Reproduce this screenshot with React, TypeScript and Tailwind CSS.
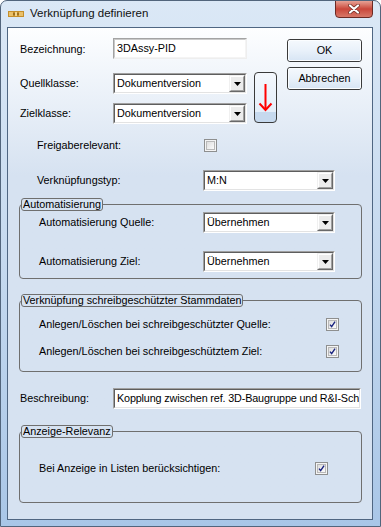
import React from "react";

function Sunken({ className = "", children, light = false }: { className?: string; children?: React.ReactNode; light?: boolean }) {
  return (
    <div
      className={
        "flex border " +
        (light
          ? "border-t-[#a3a3a3] border-l-[#a3a3a3] border-r-[#eeeeee] border-b-[#eeeeee] "
          : "border-t-[#a0a0a0] border-l-[#a0a0a0] border-r-[#ffffff] border-b-[#ffffff] ") +
        className
      }
    >
      <div
        className={
          "flex flex-1 min-w-0 border bg-white " +
          (light
            ? "border-t-[#c9c9c9] border-l-[#c9c9c9] border-r-[#f4f4f4] border-b-[#f4f4f4]"
            : "border-t-[#5e5e5e] border-l-[#5e5e5e] border-r-[#e3e3e3] border-b-[#e3e3e3]")
        }
      >
        {children}
      </div>
    </div>
  );
}

function Combo({ className = "", value }: { className?: string; value: string }) {
  return (
    <Sunken className={"h-[21px] " + className}>
      <div className="flex-1 min-w-0 pl-[2px] flex items-center whitespace-nowrap overflow-hidden">{value}</div>
      <div className="w-[16px] h-full flex border border-t-[#f0f0f0] border-l-[#f0f0f0] border-r-[#696969] border-b-[#696969]">
        <div className="flex-1 flex items-center justify-center bg-[#ececec] border border-t-white border-l-white border-r-[#a0a0a0] border-b-[#a0a0a0]">
          <svg width="7" height="4" viewBox="0 0 7 4">
            <path d="M0 0H7L3.5 4Z" fill="#000" />
          </svg>
        </div>
      </div>
    </Sunken>
  );
}

function Check({ checked }: { checked?: boolean }) {
  return (
    <div className="w-[13px] h-[13px] shrink-0 border border-[#8e8f8f] bg-[#f4f4f4] p-[1px]">
      <div className="w-full h-full border border-[#b9b9b9] bg-linear-to-br from-[#dedede] to-[#fbfbfb] flex items-center justify-center">
        {checked && (
          <svg width="9" height="9" viewBox="0 0 9 9">
            <path d="M1.3 4.6 L3.4 7.2 L7.8 0.8" stroke="#17217f" strokeWidth="1.8" fill="none" />
          </svg>
        )}
      </div>
    </div>
  );
}

function Btn({ className = "", children }: { className?: string; children: React.ReactNode }) {
  return (
    <div
      className={
        "flex items-center justify-center rounded-[3px] border border-[#3a3a3a] bg-linear-to-b from-[#f5f9fd] via-[#e9f1fa] to-[#d7e5f4] " +
        className
      }
    >
      <div className="w-full h-full flex items-center justify-center rounded-[2px] border border-[#fbfdff]">{children}</div>
    </div>
  );
}

function Group({ title, className = "", children }: { title: string; className?: string; children: React.ReactNode }) {
  return (
    <fieldset className={"w-[343px] border border-[#6f6f6f] rounded-[4px] " + className}>
      <legend className="ml-[1px] h-[13px] px-[1px] border border-[#6f6f6f] rounded-[3px] leading-[11px]">{title}</legend>
      {children}
    </fieldset>
  );
}

export default function App() {
  return (
    <div className="w-[381px] h-[527px] flex flex-col border border-[#52657c] rounded-t-[7px] bg-linear-to-b from-[#dbe8f6] via-[#c5d9ef] to-[#a9c6e7] font-['Liberation_Sans',Arial,sans-serif] text-[10.8px] text-black overflow-hidden">
      {/* title bar */}
      <div className="h-[26px] flex items-center">
        <svg className="ml-[7px]" width="16" height="6" viewBox="0 0 16 6">
          <rect x="0" y="0" width="16" height="6" fill="#c58f2b" />
          <rect x="1" y="1" width="4" height="4" fill="#e9c06a" />
          <rect x="11" y="1" width="4" height="4" fill="#e9c06a" />
          <rect x="5" y="2.5" width="6" height="1" fill="#7a5212" />
          <rect x="7" y="1" width="2" height="4" fill="#f3d58c" />
        </svg>
        <span className="ml-[6px] text-[11.5px] text-[#111]">Verknüpfung definieren</span>
        <div className="ml-auto mr-[7px] self-start mt-[-1px] w-[38px] h-[18px] rounded-b-[4px] border border-[#6b2a24] bg-linear-to-b from-[#e6a195] via-[#c9463a] to-[#d77768] flex items-center justify-center">
          <svg width="12" height="10" viewBox="0 0 12 10">
            <path d="M2 1.5 L10 8.5 M10 1.5 L2 8.5" stroke="#6a2a22" strokeWidth="3.6" strokeLinecap="round" />
            <path d="M2 1.5 L10 8.5 M10 1.5 L2 8.5" stroke="#ffffff" strokeWidth="2.2" strokeLinecap="round" />
          </svg>
        </div>
      </div>

      {/* client area */}
      <div className="ml-[6px] w-[366px] h-[493px] border border-[#4f6682] bg-linear-to-b from-[#fdfeff] to-[#d6e2f1] to-30% flex flex-col pl-[11px] pr-[10px] pt-[10px]">
        {/* top block */}
        <div className="flex ml-[1px]">
          <div className="flex flex-col w-[227px]">
            <div className="flex h-[21px] items-center">
              <span className="w-[93px] pt-[2px]">Bezeichnung:</span>
              <Sunken light className="w-[134px] h-[21px]">
                <div className="pl-[2px] flex items-center">3DAssy-PID</div>
              </Sunken>
            </div>
            <div className="flex h-[21px] items-center mt-[14px]">
              <span className="w-[93px]">Quellklasse:</span>
              <Combo className="w-[134px]" value="Dokumentversion" />
            </div>
            <div className="flex h-[21px] items-center mt-[9px]">
              <span className="w-[93px]">Zielklasse:</span>
              <Combo className="w-[134px]" value="Dokumentversion" />
            </div>
          </div>
          <div className="ml-[7px] mt-[34px] w-[23px] h-[51px] rounded-[4px] border border-[#3a3a3a] bg-linear-to-b from-[#f4f8fd] via-[#e4eef9] via-80% to-[#c6d9ee] to-80%">
            <svg width="21" height="49" viewBox="0 0 21 49">
              <path d="M10.5 11 V37" stroke="#ff0000" strokeWidth="2" />
              <path d="M4.5 30.5 L10.5 37 L16.5 30.5" stroke="#ff0000" strokeWidth="2" fill="none" />
            </svg>
          </div>
          <div className="ml-[10px] flex flex-col w-[75px]">
            <Btn className="mt-[1px] h-[23px]">OK</Btn>
            <Btn className="mt-[5px] h-[23px]">Abbrechen</Btn>
          </div>
        </div>

        {/* Freigaberelevant */}
        <div className="flex items-center h-[13px] mt-[15px] ml-[18px]">
          <span className="w-[167px]">Freigaberelevant:</span>
          <Check />
        </div>

        {/* Verknüpfungstyp */}
        <div className="flex items-center h-[21px] mt-[18px] ml-[18px]">
          <span className="w-[166px]">Verknüpfungstyp:</span>
          <Combo className="w-[132px]" value="M:N" />
        </div>

        {/* Automatisierung */}
        <Group title="Automatisierung" className="mt-[7px] pt-[1px] pb-[6px]">
          <div className="flex items-center h-[21px] ml-[19px]">
            <span className="w-[164px]">Automatisierung Quelle:</span>
            <Combo className="w-[132px]" value="Übernehmen" />
          </div>
          <div className="flex items-center h-[21px] mt-[18px] ml-[19px]">
            <span className="w-[164px]">Automatisierung Ziel:</span>
            <Combo className="w-[132px]" value="Übernehmen" />
          </div>
        </Group>

        {/* schreibgeschützt */}
        <Group title="Verknüpfung schreibgeschützter Stammdaten" className="mt-[15px] pt-[11px] pb-[13px]">
          <div className="flex items-center h-[13px] ml-[19px]">
            <span className="w-[287px]">Anlegen/Löschen bei schreibgeschützter Quelle:</span>
            <Check checked />
          </div>
          <div className="flex items-center h-[13px] mt-[14px] ml-[19px]">
            <span className="w-[287px]">Anlegen/Löschen bei schreibgeschütztem Ziel:</span>
            <Check checked />
          </div>
        </Group>

        {/* Beschreibung */}
        <div className="flex items-center h-[21px] mt-[16px] ml-[1px]">
          <span className="w-[93px]">Beschreibung:</span>
          <Sunken className="w-[248px] h-[21px]">
            <div className="pl-[2px] flex items-center whitespace-nowrap overflow-hidden tracking-[-0.15px]">
              Kopplung zwischen ref. 3D-Baugruppe und R&amp;I-Sch
            </div>
          </Sunken>
        </div>

        {/* Anzeige-Relevanz */}
        <Group title="Anzeige-Relevanz" className="mt-[16px] pt-[24px] pb-[27px]">
          <div className="flex items-center h-[13px] ml-[19px]">
            <span className="w-[276px]">Bei Anzeige in Listen berücksichtigen:</span>
            <Check checked />
          </div>
        </Group>
      </div>
    </div>
  );
}
